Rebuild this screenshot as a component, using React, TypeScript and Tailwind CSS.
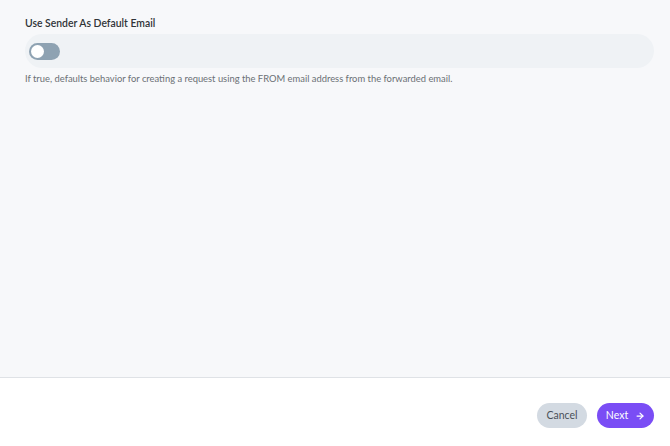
import React, { useState } from 'react';
import { ArrowRight } from 'lucide-react';

const App: React.FC = () => {
    const [enabled, setEnabled] = useState(false);

    return (
        <div className="h-[446px] w-full flex flex-col bg-white font-['Lato',sans-serif]">
            <div className="flex-1 bg-[#f7f8fa] border-b border-[#dfe2e6] pl-[25px] pr-[16px] pt-[17px]">
                <label className="block text-[10.4px] font-semibold text-[#2f3337] leading-[13px]">
                    Use Sender As Default Email
                </label>
                <div className="mt-[4px] h-[34px] w-full rounded-full bg-[#eff2f5] flex items-center px-[4px]">
                    <button
                        type="button"
                        onClick={() => setEnabled(!enabled)}
                        className={`relative h-[17px] w-[31px] rounded-full ${enabled ? 'bg-[#7a4df5]' : 'bg-[#8ea2b2]'}`}
                    >
                        <span
                            className={`absolute top-[2px] h-[13px] w-[13px] rounded-full bg-white ${enabled ? 'left-[16px]' : 'left-[2px]'}`}
                        />
                    </button>
                </div>
                <p className="mt-[4px] text-[9.4px] text-[#6b7075] leading-[13px]">
                    If true, defaults behavior for creating a request using the FROM email address from the forwarded email.
                </p>
            </div>
            <div className="h-[68px] flex items-center justify-end gap-[10px] px-[16px] pt-[7px]">
                <button
                    type="button"
                    className="h-[25px] w-[50px] rounded-full bg-[#d3dae2] text-[10.5px] text-[#4a5058]"
                >
                    Cancel
                </button>
                <button
                    type="button"
                    className="h-[25px] w-[57px] rounded-full bg-[#7a4df5] text-[10.5px] text-white flex items-center justify-center gap-[7px]"
                >
                    Next
                    <ArrowRight className="w-[10px] h-[10px]" strokeWidth={3} />
                </button>
            </div>
        </div>
    );
};

export default App;
